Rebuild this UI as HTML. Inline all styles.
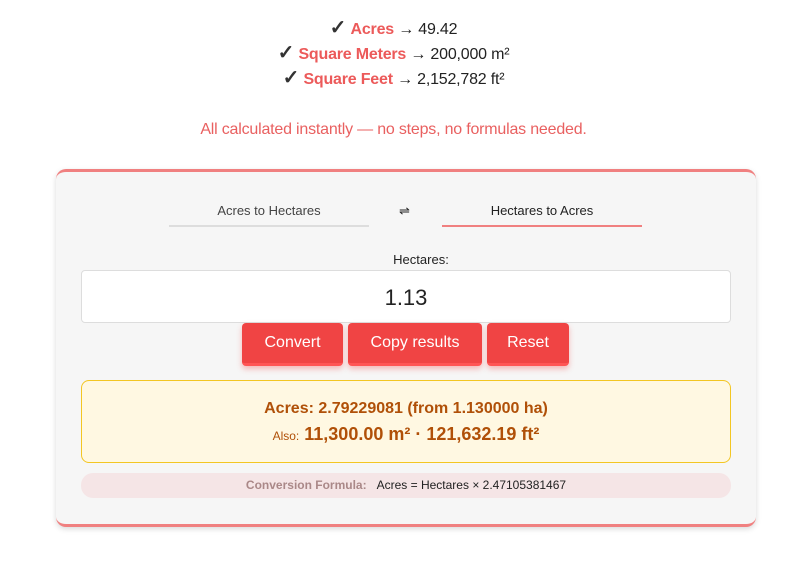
<!DOCTYPE html>
<html><head><meta charset="utf-8"><style>
*{box-sizing:border-box;margin:0;padding:0}
body{width:787px;height:561px;background:#fff;font-family:"Liberation Sans",sans-serif;position:relative;overflow:hidden;color:#222}
.l{position:absolute;left:0;width:787px;text-align:center;font-size:16px;letter-spacing:-0.2px}
.l b{color:#ec5a5a}
.ck{font-size:20px;color:#333;font-weight:bold}
.card{position:absolute;left:56px;top:169px;width:700px;height:358px;background:#f6f6f6;border-radius:10px;border-top:3px solid #f08080;border-bottom:3px solid #f08080;box-shadow:0 2px 6px rgba(0,0,0,.15)}
.a{position:absolute}
.tab{font-size:13px;text-align:center;width:200px;height:24px;border-bottom:2px solid #ddd;color:#444}
.btn{position:absolute;top:323px;height:43px;background:#f04444;color:#fff;font-size:16px;text-align:center;line-height:40px;border-radius:4px;box-shadow:0 3px 6px rgba(240,68,68,.35);border-bottom:3px solid #f55}
</style></head><body>
<div class="l" style="top:15px"><span class="ck">✓</span> <b>Acres</b> → 49.42</div>
<div class="l" style="top:40px"><span class="ck">✓</span> <b>Square Meters</b> → 200,000 m²</div>
<div class="l" style="top:65px"><span class="ck">✓</span> <b>Square Feet</b> → 2,152,782 ft²</div>
<div class="l" style="top:121px;color:#e96060">All calculated instantly — no steps, no formulas needed.</div>
<div class="card"></div>
<div class="a tab" style="left:169px;top:203px">Acres to Hectares</div>
<div class="a" style="left:399px;top:203px;font-size:13px">⇌</div>
<div class="a tab" style="left:442px;top:203px;border-color:#f08080;color:#222">Hectares to Acres</div>
<div class="a" style="left:0;width:842px;top:252px;text-align:center;font-size:13px">Hectares:</div>
<div class="a" style="left:81px;top:270px;width:650px;height:53px;background:#fff;border:1px solid #ddd;border-radius:4px;text-align:center;font-size:22px;line-height:53px">1.13</div>
<div class="btn" style="left:242px;width:101px">Convert</div>
<div class="btn" style="left:348px;width:134px">Copy results</div>
<div class="btn" style="left:487px;width:82px">Reset</div>
<div class="a" style="left:81px;top:380px;width:650px;height:83px;background:#fff8e2;border:1px solid #f3c623;border-radius:8px;text-align:center;color:#b05008;font-weight:bold">
<div style="font-size:16px;margin-top:19px">Acres: 2.79229081 (from 1.130000 ha)</div>
<div style="font-size:18px;margin-top:6px"><span style="font-size:12px;font-weight:normal">Also:</span> 11,300.00 m² · 121,632.19 ft²</div></div>
<div class="a" style="left:81px;top:473px;width:650px;height:25px;background:#f5e5e6;border-radius:12px;text-align:center;font-size:12px;line-height:25px;color:#222"><b style="color:#a88">Conversion Formula:</b>&nbsp;&nbsp;&nbsp;Acres = Hectares × 2.47105381467</div>
</body></html>
